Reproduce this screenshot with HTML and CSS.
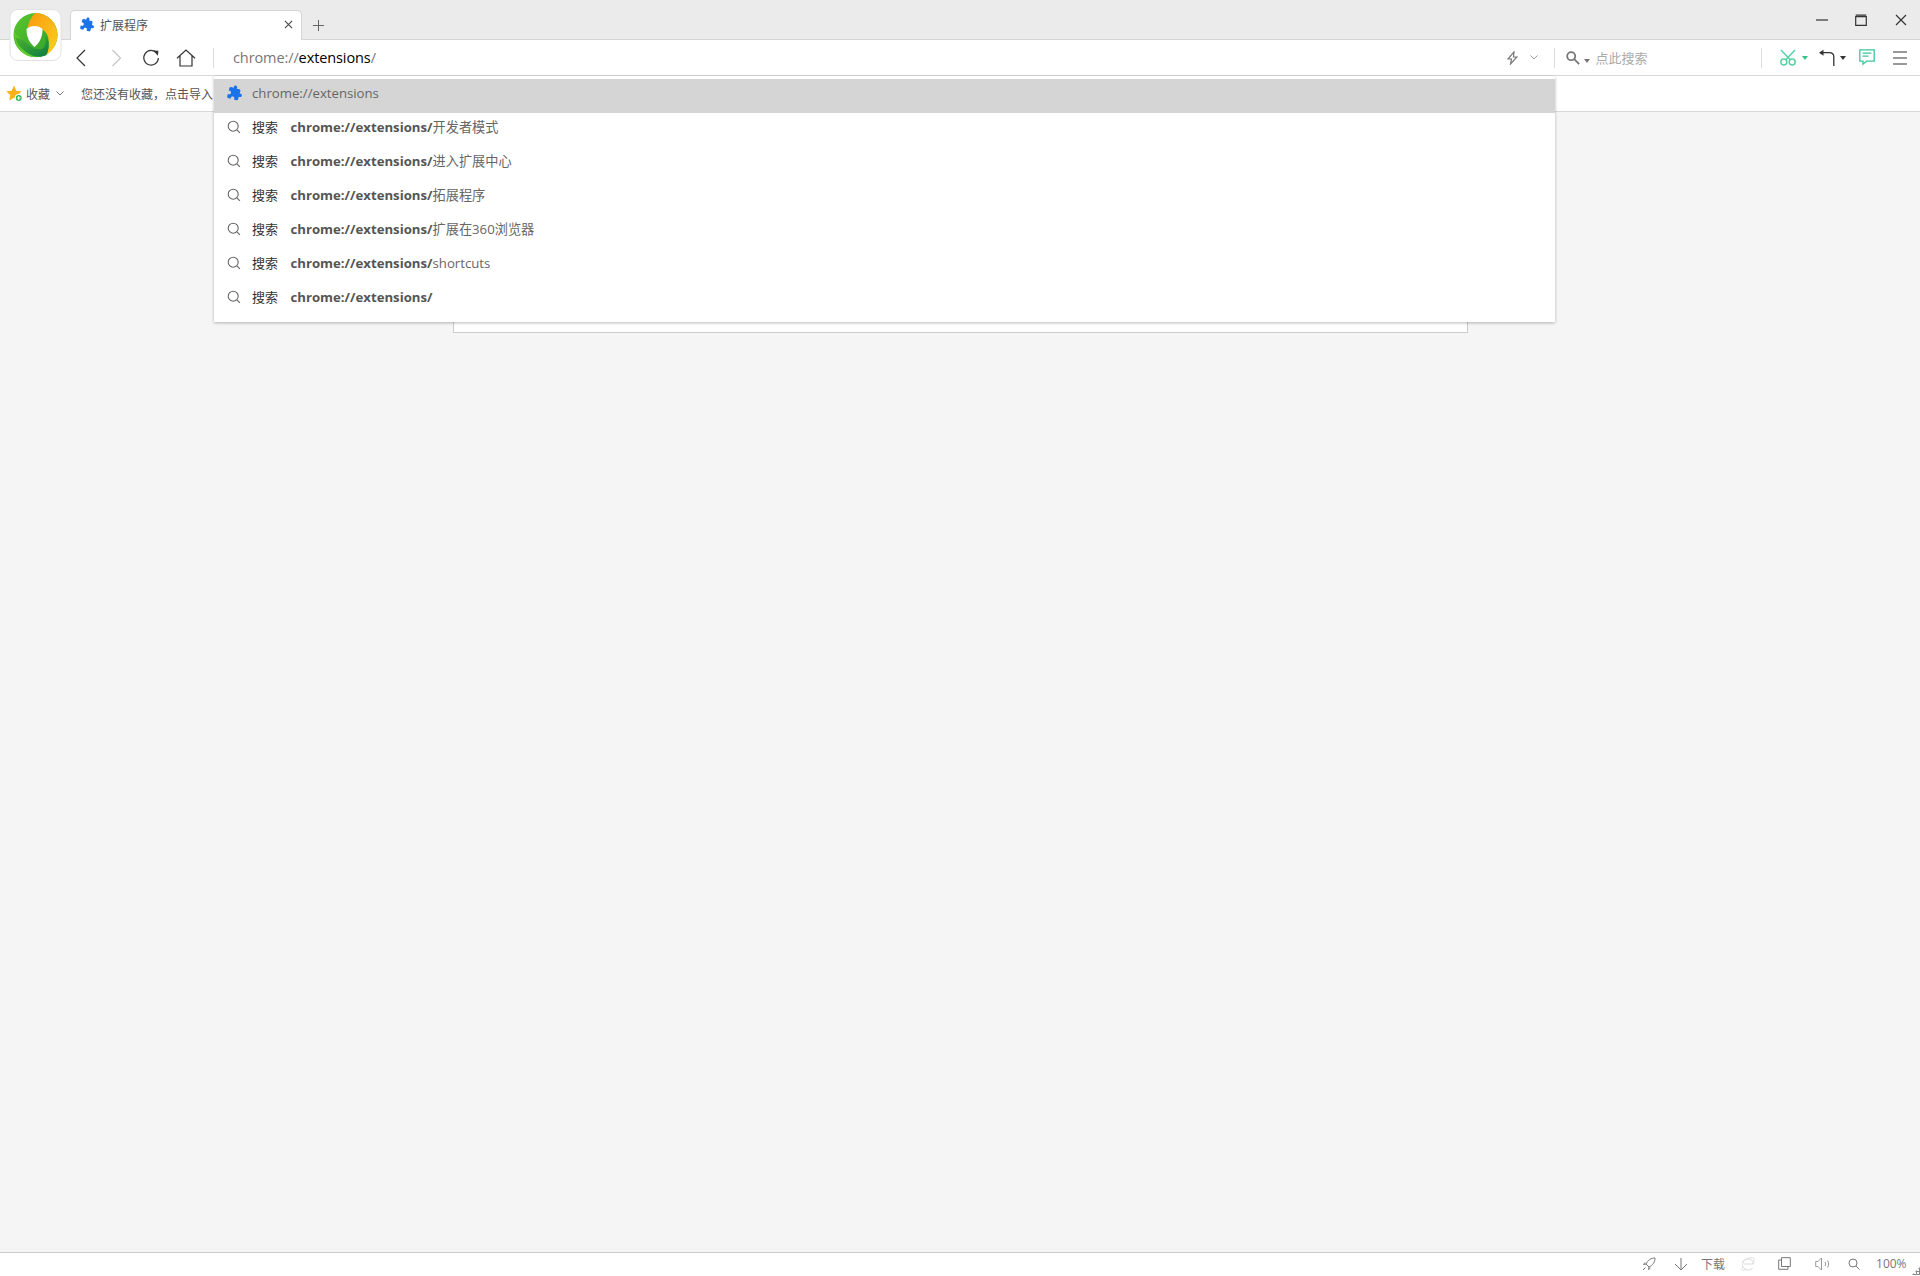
FILE: index.html
```html
<!DOCTYPE html>
<html lang="zh-CN">
<head>
<meta charset="utf-8">
<title>扩展程序</title>
<link rel="stylesheet" href="styles.css">
</head>
<body>
<svg class="defs" width="0" height="0" aria-hidden="true">
  <defs>
    <symbol id="puzzle" viewBox="0 0 24 24">
      <path transform="rotate(15 12 12)" fill="#1a73e8" d="M20.500 11H19V7c0-1.100-.9-2-2-2h-4V3.500C13 2.120 11.880 1 10.500 1S8 2.120 8 3.500V5H4c-1.100 0-1.990.9-1.990 2v3.800H3.500c1.490 0 2.700 1.210 2.700 2.700s-1.210 2.700-2.700 2.700H2V20c0 1.100.9 2 2 2h3.800v-1.500c0-1.490 1.210-2.700 2.700-2.700 1.490 0 2.700 1.210 2.700 2.700V22H17c1.100 0 2-.9 2-2v-4h1.500c1.380 0 2.500-1.120 2.500-2.500S21.880 11 20.500 11z"/>
    </symbol>
    <symbol id="lens" viewBox="0 0 14 14">
      <circle cx="6.200" cy="6.200" r="5" fill="none" stroke="#666" stroke-width="1.100"/>
      <path d="M9.900 9.900l3 3" stroke="#666" stroke-width="1.200" fill="none"/>
    </symbol>
  </defs>
</svg>

<div class="browser">
  <svg class="logo" viewBox="0 0 52 52" aria-hidden="true">
    <defs>
      <linearGradient id="lg" x1="0" y1="0" x2="1" y2="1"><stop offset="0" stop-color="#59c72c"/><stop offset="1" stop-color="#2f9e2d"/></linearGradient>
      <linearGradient id="ly" x1="0" y1="0" x2="1" y2="1"><stop offset="0" stop-color="#f99a0c"/><stop offset="1" stop-color="#fbd022"/></linearGradient>
      <linearGradient id="ld" x1="0" y1="0" x2="1" y2="1"><stop offset="0" stop-color="#4eb62b"/><stop offset="1" stop-color="#0c7c45"/></linearGradient>
    </defs>
    <rect class="logo-bg" x="0.500" y="0.500" width="51" height="51" rx="8"/>
    <circle cx="26" cy="26" r="22" fill="url(#lg)"/>
    <path d="M26 4c12 0 22 10 22 22 0 9-5 16-11 20 2-5 3-10 2-16-1-7-6-11-14-12-3 0-5 1-7 2 1-6 3-12 8-16z" fill="url(#ly)"/>
    <path d="M4.500 22c4 8 8 7 12 12 4 5 10 10 20 12-7 3-14 3-20 0-7-4-12-13-12-24z" fill="#62cc2a"/>
    <path d="M6 28c5 2 9 3 12 7 3 3 8 6 14 5 4-1 5-7 4-14 4 5 4 13 1 20-6 3-14 2-19-2-6-4-11-9-12-16z" fill="url(#ld)"/>
    <path d="M17 20c2-2 5-3 8-3 3 0 6 1 8 3 0 7-2 13-8 18-6-5-8-11-8-18z" fill="#fff"/>
  </svg>

  <header class="tabstrip">
    <div class="tab">
      <svg class="tab-icon"><use href="#puzzle"/></svg>
      <span class="tab-title">扩展程序</span>
      <svg class="tab-close" viewBox="0 0 10 10"><path d="M1 1l8 8M9 1l-8 8"/></svg>
    </div>
    <svg class="new-tab" viewBox="0 0 14 14"><path d="M7 1v12M1 7h12"/></svg>
    <div class="win-controls">
      <svg class="win-min" viewBox="0 0 12 12"><path d="M0 6h12"/></svg>
      <svg class="win-max" viewBox="0 0 12 12"><path d="M.7 2.600h10.600v8.700H.7zM.7 1.200h10.600"/></svg>
      <svg class="win-close" viewBox="0 0 12 12"><path d="M1 1l10 10M11 1L1 11"/></svg>
    </div>
  </header>

  <nav class="toolbar">
    <svg class="ico nav-back" viewBox="0 0 11 18"><path d="M10 1L2 9l8 8"/></svg>
    <svg class="ico nav-fwd" viewBox="0 0 11 18"><path d="M1.500 1l8 8-8 8"/></svg>
    <svg class="ico nav-reload" viewBox="0 0 18 18"><path d="M14.800 4.200A7.300 7.300 0 1 0 16.400 9"/><path class="solid" d="M11.200 1.500l5.200.2-.5 5z"/></svg>
    <svg class="ico nav-home" viewBox="0 0 20 18"><path d="M1 9.200L10 1l9 8.200M4 7v10h12V7"/></svg>
    <span class="divider first"></span>
    <div class="address"><span class="scheme">chrome://</span><span class="host">extensions</span><span class="scheme">/</span></div>
    <svg class="ico bolt" viewBox="0 0 11 14"><path d="M7 .8L1 8h3.500L3.500 13 10 6H6.500z"/></svg>
    <svg class="ico chev" viewBox="0 0 8 5"><path d="M.5.500L4 4 7.500.500"/></svg>
    <span class="divider second"></span>
    <svg class="ico s-lens" viewBox="0 0 14 14"><circle cx="5.200" cy="5.200" r="4"/><path d="M8.200 8.200l5 5"/></svg>
    <span class="caret grey"></span>
    <span class="search-hint">点此搜索</span>
    <span class="divider third"></span>
    <svg class="ico scissors" viewBox="0 0 16 17"><circle cx="3.800" cy="13" r="3"/><circle cx="12.200" cy="13" r="3"/><path d="M1 1l9.500 10M15 1L5.500 11"/></svg>
    <span class="caret green"></span>
    <svg class="ico undo" viewBox="0 0 16 18"><path d="M14.800 17V8c0-2.800-2-4.300-4.500-4.300H3"/><path class="solid" d="M0 3.700L4.500.7v6z"/></svg>
    <span class="caret dark"></span>
    <svg class="ico chat" viewBox="0 0 16 17"><path d="M.8.800h14.400v11.400H7.500l-3.500 3v-3H.8z"/><path d="M3.500 4.200h9M3.500 7.200h6"/></svg>
    <svg class="ico menu" viewBox="0 0 14 14"><path d="M0 1h14M0 7h14M0 13h14"/></svg>
  </nav>

  <div class="bookmarks">
    <svg class="star" viewBox="0 0 16 16">
      <path d="M7.500.500l2.200 4.800 5.100.6-3.800 3.500 1 5.100-4.500-2.600L3 14.500l1-5.100L.2 5.900l5.100-.6z" fill="#fbb21a"/>
      <circle cx="12" cy="12.300" r="3.300" fill="#2fb65b" stroke="#fff"/>
      <path d="M10.300 12.300h3.400M12 10.600V14" stroke="#fff" stroke-width="1"/>
    </svg>
    <span class="bm-label">收藏</span>
    <svg class="ico bm-chev" viewBox="0 0 8 5"><path d="M.5.500L4 4 7.500.500"/></svg>
    <span class="bm-hint">您还没有收藏，点击导入</span>
  </div>

  <main class="content">
    <div class="card"></div>
  </main>

  <div class="omnibox">
    <div class="row active">
      <svg class="row-puzzle"><use href="#puzzle"/></svg>
      <span class="row-url">chrome://extensions</span>
    </div>
    <div class="row"><svg class="row-lens"><use href="#lens"/></svg><span class="row-kind">搜索</span><span class="row-q"><b>chrome://extensions/</b>开发者模式</span></div>
    <div class="row"><svg class="row-lens"><use href="#lens"/></svg><span class="row-kind">搜索</span><span class="row-q"><b>chrome://extensions/</b>进入扩展中心</span></div>
    <div class="row"><svg class="row-lens"><use href="#lens"/></svg><span class="row-kind">搜索</span><span class="row-q"><b>chrome://extensions/</b>拓展程序</span></div>
    <div class="row"><svg class="row-lens"><use href="#lens"/></svg><span class="row-kind">搜索</span><span class="row-q"><b>chrome://extensions/</b>扩展在360浏览器</span></div>
    <div class="row"><svg class="row-lens"><use href="#lens"/></svg><span class="row-kind">搜索</span><span class="row-q"><b>chrome://extensions/</b>shortcuts</span></div>
    <div class="row"><svg class="row-lens"><use href="#lens"/></svg><span class="row-kind">搜索</span><span class="row-q"><b>chrome://extensions/</b></span></div>
  </div>

  <footer class="statusbar">
    <svg class="st st-rocket" viewBox="0 0 14 14"><path d="M13 1c-4 0-7 2-9 6l3 3c4-2 6-5 6-9zM4 7L1.500 7.500 3 5.500M7 10l-.5 2.500 2-1.500M3.500 10.500L1 13"/></svg>
    <svg class="st st-down" viewBox="0 0 14 14"><path d="M7 1v12M1 7l6 6 6-6"/></svg>
    <span class="st-text">下载</span>
    <svg class="st st-ie" viewBox="0 0 14 14"><path d="M2.500 7h10c0-3-2-5-5-5S1.500 4.500 1.500 7.500 4 13 7.500 13c2 0 3.500-1 4.500-2.500M1 5c3-3.500 9-5 11.500-4 1.500 1 .5 4-1 6M2 9c-1 2-1.500 3.500-.5 4 1 .5 3 0 5-1"/></svg>
    <svg class="st st-win" viewBox="0 0 13 13"><path d="M3.500 9.500V.7h8.800v8.800zM3.500 3H.7v9.300H10V9.500"/></svg>
    <svg class="st st-sound" viewBox="0 0 15 14"><path d="M6.500 1L3 4.500H.7v5H3L6.500 13zM10 5c.8 1.200.8 2.800 0 4M12.500 3.500c1.500 2 1.500 5 0 7"/></svg>
    <svg class="st st-zoom" viewBox="0 0 12 12"><circle cx="5" cy="5" r="4"/><path d="M8 8l3.500 3.500"/></svg>
    <span class="st-pct">100%</span>
    <span class="grip"></span>
  </footer>
</div>
</body>
</html>
```
FILE: styles.css
```css
* { box-sizing: border-box; }
html, body { margin: 0; height: 100%; }
body {
  font-family: "Open Sans", "Noto Sans CJK SC", sans-serif;
  background: #f5f5f5;
  color: #555;
  overflow: hidden;
}
.defs { position: absolute; }
svg { display: block; flex: none; }
.browser { position: relative; width: 1920px; height: 1276px; display: flex; flex-direction: column; }

.logo { position: absolute; left: 9px; top: 9px; width: 53px; height: 52px; z-index: 3; }
.logo-bg { fill: #fff; stroke: #e2e2e2; }

/* Tab strip */
.tabstrip { height: 40px; background: #ebebeb; border-bottom: 1px solid #d5d5d5; display: flex; align-items: flex-end; padding-left: 70px; }
.tab { width: 232px; height: 30px; margin-bottom: -1px; background: #fff; border: 1px solid #d5d5d5; border-bottom: 0; border-radius: 5px 5px 0 0; display: flex; align-items: center; padding: 0 8px 2px 9px; position: relative; z-index: 1; }
.tab-icon { width: 15px; height: 15px; }
.tab-title { margin-left: 5px; font-size: 12px; color: #555; flex: 1; font-family: "Noto Sans CJK SC", sans-serif; }
.tab-close { width: 9px; height: 9px; fill: none; stroke: #444; stroke-width: 1.2; }
.new-tab { width: 13px; height: 13px; margin: 0 0 7px 10px; fill: none; stroke: #666; stroke-width: 1.100; }
.win-controls { margin-left: auto; align-self: flex-start; display: flex; align-items: center; padding: 14px 13px 0 0; }
.win-controls svg { width: 12px; height: 12px; fill: none; stroke: #333; stroke-width: 1.200; }
.win-max { margin-left: 27px; stroke-width: 1.300; }
.win-close { margin-left: 28px; }

/* Toolbar */
.toolbar { height: 36px; background: #fff; border-bottom: 1px solid #d8d8d8; display: flex; align-items: center; font-size: 14px; }
.ico { fill: none; stroke: #333; stroke-width: 1.200; }
.ico .solid { fill: #333; stroke: none; }
.nav-back { width: 11px; height: 18px; margin-left: 75px; }
.nav-fwd { width: 11px; height: 18px; margin-left: 25px; stroke: #c4c4c4; }
.nav-reload { width: 18px; height: 18px; margin-left: 20px; }
.nav-home { width: 20px; height: 18px; margin-left: 16px; }
.divider { width: 1px; height: 20px; background: #dcdcdc; }
.divider.first { margin-left: 17px; }
.address { margin-left: 19px; flex: 1; font-size: 14.500px; letter-spacing: -0.100px; color: #000; }
.scheme { color: #777; }
.host { color: #000; }
.bolt { width: 11px; height: 14px; stroke: #777; }
.chev { width: 8px; height: 5px; margin-left: 12px; stroke: #999; stroke-width: 1; }
.divider.second { margin-left: 16px; }
.s-lens { width: 14px; height: 14px; margin-left: 11px; stroke: #777; stroke-width: 1.800; }
.caret { width: 0; height: 0; border-left: 3.500px solid transparent; border-right: 3.500px solid transparent; border-top: 4px solid; }
.caret.grey { color: #777; margin: 6px 0 0 4px; }
.caret.green { color: #35c28f; margin-left: 6px; }
.caret.dark { color: #333; margin-left: 5px; }
.search-hint { margin-left: 6px; width: 165px; font-size: 13px; color: #aaa; font-family: "Noto Sans CJK SC", sans-serif; }
.scissors { width: 16px; height: 17px; margin-left: 18px; stroke: #55d3a4; stroke-width: 1.500; }
.undo { width: 16px; height: 18px; margin-left: 11px; stroke-width: 1.300; }
.chat { width: 16px; height: 17px; margin-left: 13.500px; stroke: #3cc59a; stroke-width: 1.300; }
.menu { width: 14px; height: 14px; margin: 0 13px 0 18px; stroke-width: 1.200; }

/* Bookmarks */
.bookmarks { height: 36px; background: #fff; border-bottom: 1px solid #d8d8d8; display: flex; align-items: center; padding-left: 6px; font-size: 12px; font-family: "Noto Sans CJK SC", sans-serif; color: #555; }
.star { width: 17px; height: 17px; }
.bm-label { margin-left: 3px; }
.bm-chev { width: 8px; height: 5px; margin-left: 6px; stroke: #777; stroke-width: 1; }
.bm-hint { margin-left: 17px; white-space: nowrap; }

/* Page */
.content { flex: 1; background: #f5f5f5; padding-left: 453px; }
.card { width: 1015px; height: 221px; background: #fff; border: 1px solid #ccc; border-top: 0; }

/* Omnibox dropdown */
.omnibox { position: absolute; left: 214px; top: 76px; width: 1341px; height: 246px; padding-top: 3px; background: #fff; box-shadow: 0 1px 3px rgba(0,0,0,.28); z-index: 2; }
.row { height: 34px; display: flex; align-items: center; padding: 0 0 7px 13px; font-size: 13.200px; color: #666; }
.row.active { background: #d5d5d5; padding-bottom: 6px; }
.row-puzzle { width: 16px; height: 16px; margin-right: 9px; }
.row-url { color: #666; }
.row-lens { width: 14px; height: 14px; margin: 1px 11px 0 0; }
.row-kind { width: 38.500px; font-size: 13px; color: #333; font-family: "Noto Sans CJK SC", sans-serif; }
.row-q { color: #666; }
.row-q b { font-weight: 700; color: #555; }

/* Status bar */
.statusbar { height: 24px; background: #fff; border-top: 1px solid #ccc; display: flex; align-items: center; padding: 0 0 2px 1642px; font-size: 12px; color: #777; position: relative; }
.st { fill: none; stroke: #777; stroke-width: 1; }
.st-rocket { width: 14px; height: 14px; }
.st-down { width: 14px; height: 14px; margin-left: 18px; }
.st-text { margin-left: 13px; font-family: "Noto Sans CJK SC", sans-serif; }
.st-ie { width: 14px; height: 14px; margin-left: 16px; stroke: #ddd; }
.st-win { width: 13px; height: 13px; margin-left: 23px; }
.st-sound { width: 15px; height: 14px; margin-left: 24px; stroke: #999; }
.st-zoom { width: 12px; height: 12px; margin-left: 18px; }
.st-pct { margin-left: 16px; }
.grip { position: absolute; right: 0; bottom: 1px; width: 8px; height: 8px; background-image: radial-gradient(#888 1px, transparent 1.100px); background-size: 3px 3px; clip-path: polygon(100% 0, 100% 100%, 0 100%); }
```
